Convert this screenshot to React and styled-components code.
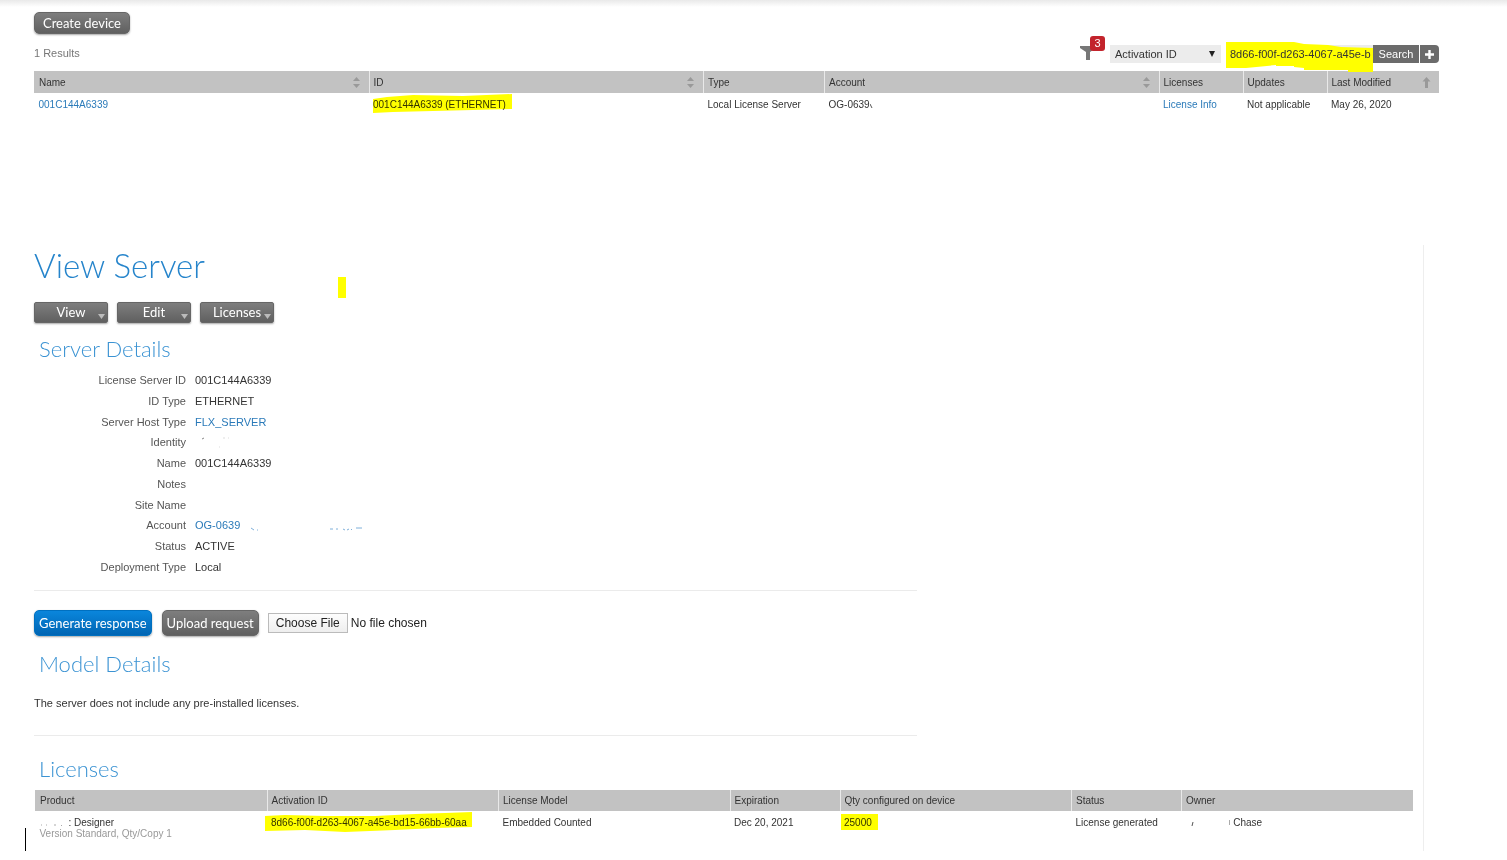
import React from "react";
import styled, { createGlobalStyle, css } from "styled-components";

const GlobalStyle = createGlobalStyle`
  * {
    box-sizing: border-box;
  }
  body {
    margin: 0;
    background: #fff;
    color: #333;
    font-family: "Liberation Sans", Arial, sans-serif;
    font-size: 11px;
  }
`;

const Page = styled.main`
  padding-left: 34px;
`;

const TopShade = styled.div`
  height: 12px;
  margin-left: -34px;
  background: linear-gradient(#e9e9e9, #fff 7px);
`;

const Devices = styled.section`
  margin-right: 68px;
`;

const Button = styled.button`
  height: ${(props) => (props.$tall ? "26px" : "22px")};
  padding: 0 ${(props) => (props.$tall ? "4px" : "8px")} 1px;
  border: 1px solid #666;
  border-radius: 5px;
  background: linear-gradient(#7e7e7e, #606060);
  box-shadow: 0 1px 2px rgba(0, 0, 0, 0.35);
  color: #fff;
  font-family: Lato, sans-serif;
  font-size: 13px;
  white-space: nowrap;
  cursor: pointer;
  ${(props) =>
    props.$primary &&
    css`
      border-color: #0070c0;
      background: linear-gradient(#0a86dc, #0065b3);
    `}
`;

const ResultsBar = styled.div`
  display: flex;
  justify-content: space-between;
  align-items: center;
  margin: 11px 0 8px;
  color: #777;
`;

const Count = styled.span`
  padding-bottom: 2px;
`;

const Filters = styled.form`
  display: flex;
  height: 18px;
`;

const FilterIcon = styled.div`
  position: relative;
  width: 30px;
  svg {
    display: block;
  }
`;

const Badge = styled.span`
  position: absolute;
  top: -9px;
  left: 10px;
  width: 15px;
  height: 15px;
  border-radius: 3px;
  background: #c3242c;
  color: #fff;
  line-height: 15px;
  text-align: center;
`;

const SelectWrap = styled.div`
  position: relative;
  margin-right: 5px;
  svg {
    position: absolute;
    top: 6px;
    right: 6px;
    pointer-events: none;
  }
`;

const Select = styled.select`
  appearance: none;
  width: 111px;
  height: 18px;
  padding: 0 5px;
  border: 0;
  border-radius: 0;
  background: #ececec;
  color: #333;
  font: inherit;
`;

const SearchWrap = styled.div`
  position: relative;
  padding-right: 2px;
  background: #ececec;
`;

const SearchInput = styled.input`
  position: relative;
  display: block;
  width: 145px;
  height: 18px;
  padding: 0 0 0 4px;
  border: 0;
  background: transparent;
  color: #333;
  font: inherit;
`;

const SearchButton = styled.button`
  width: ${(props) => (props.$small ? "19px" : "46px")};
  height: 18px;
  margin-right: ${(props) => (props.$small ? "0" : "1px")};
  padding: 0;
  border: 0;
  border-radius: ${(props) => (props.$small ? "0 4px 4px 0" : "0")};
  background: #6b6b6b;
  color: #fff;
  font: inherit;
  cursor: pointer;
  svg {
    display: block;
    margin: 0 auto;
  }
`;

const Marker = styled.svg`
  position: absolute;
  top: ${(props) => props.$top || 0}px;
  left: ${(props) => props.$left || 0}px;
  mix-blend-mode: ${(props) => (props.$solid ? "normal" : "multiply")};
  pointer-events: none;
`;

const Table = styled.table`
  width: 100%;
  table-layout: fixed;
  border-collapse: collapse;
  font-size: 10px;
`;

const Col = styled.col`
  width: ${(props) => (props.$width ? `${props.$width}px` : "auto")};
`;

const Th = styled.th`
  height: ${(props) => (props.$short ? "21px" : "22px")};
  padding: 0 8px 0 4px;
  border-left: 1px solid #e9e9e9;
  background: #c2c2c2;
  font-weight: normal;
  text-align: left;
  white-space: nowrap;
  &:first-child {
    border-left-color: #c2c2c2;
  }
`;

const ThInner = styled.div`
  display: flex;
  justify-content: space-between;
  align-items: center;
`;

const Td = styled.td`
  padding: 6px 4px 4px;
  line-height: 12px;
  vertical-align: top;
  white-space: nowrap;
`;

const Link = styled.a`
  color: #2a7ab9;
  text-decoration: none;
`;

const Marked = styled.span`
  position: relative;
`;

const Note = styled.div`
  color: #999;
  line-height: 10px;
`;

const Server = styled.section`
  position: relative;
  margin: 130px 83px 0 0;
  padding-right: 10px;
  border-right: 1px solid #eee;
`;

const Title = styled.h1`
  margin: 0 0 17px;
  color: #2584cb;
  font-family: Lato, sans-serif;
  font-size: 33px;
  font-weight: 300;
  line-height: 40px;
`;

const Heading = styled.h2`
  margin: 0 0 0 5px;
  color: #3b93d3;
  font-family: Lato, sans-serif;
  font-size: 22px;
  font-weight: 300;
  line-height: 30px;
`;

const Menus = styled.div`
  display: flex;
  gap: 9px;
  margin-bottom: 11px;
`;

const MenuButton = styled.button`
  position: relative;
  width: 74px;
  height: 21px;
  padding: 0 0 1px;
  border: 1px solid #666;
  border-radius: 2px;
  background: linear-gradient(#7e7e7e, #606060);
  box-shadow: 0 1px 2px rgba(0, 0, 0, 0.35);
  color: #fff;
  font-family: Lato, sans-serif;
  font-size: 13px;
  cursor: pointer;
  svg {
    position: absolute;
    right: 2px;
    bottom: 3px;
  }
`;

const Details = styled.dl`
  display: grid;
  grid-template-columns: 152px 1fr;
  grid-auto-rows: 1fr;
  column-gap: 9px;
  align-items: center;
  min-height: 207px;
  margin: 6px 0 13px;
`;

const Term = styled.dt`
  color: #555;
  text-align: right;
`;

const Value = styled.dd`
  display: flex;
  margin: 0;
`;

const Rule = styled.hr`
  width: 64%;
  margin: 0;
  border: 0;
  border-top: 1px solid #ebebeb;
`;

const Actions = styled.div`
  display: flex;
  align-items: center;
  margin: 19px 0 13px;
`;

const Spaced = styled.div`
  margin-left: 10px;
`;

const FileInput = styled.input`
  margin-left: 9px;
  font-family: inherit;
  font-size: 12px;
  color: #222;
  &::file-selector-button {
    height: 20px;
    margin: 0 3px 0 0;
    padding: 0 7px;
    border: 1px solid #bbb;
    border-radius: 0;
    background: linear-gradient(#fdfdfd, #eee);
    color: #222;
    font: inherit;
  }
`;

const Text = styled.p`
  margin: 17px 0 25px;
  line-height: 14px;
`;

const LicenseBlock = styled.div`
  padding: 18px 0 8px;
`;

const LicenseTable = styled.div`
  margin: 6px 0 0 1px;
`;

const Swatch = styled.span`
  position: absolute;
  top: 32px;
  left: 304px;
  width: 8px;
  height: 21px;
  background: #ff0;
`;

const Caret = styled.span`
  position: absolute;
  bottom: 0;
  left: -9px;
  width: 1px;
  height: 23px;
  background: #000;
`;

const deviceCols = [
  { label: "Name", sort: "both" },
  { label: "ID", sort: "both" },
  { label: "Type", width: 121 },
  { label: "Account", sort: "both" },
  { label: "Licenses", width: 84 },
  { label: "Updates", width: 84 },
  { label: "Last Modified", width: 112, sort: "up" },
];

const licenseCols = [
  { label: "Product" },
  { label: "Activation ID" },
  { label: "License Model" },
  { label: "Expiration", width: 110 },
  { label: "Qty configured on device" },
  { label: "Status", width: 110 },
  { label: "Owner" },
];

const IdentityMarks = () => (
  <svg width='40' height='12' aria-hidden='true'>
    <path d='M7 3l2-1' stroke='#888' />
    <path d='M28 2h2M33 2h1M24 11h1' stroke='#ddd' />
  </svg>
);

const AccountMarks = () => (
  <svg width='124' height='12' aria-hidden='true'>
    <path d='M11 9l3 2M17 11h1' fill='none' stroke='#7fb0da' />
    <path
      d='M90 10h3M96 10h2M103 10l2 1M107 11l2-1M112 10l-1 1M116 9h6'
      fill='none'
      stroke='#7fb0da'
    />
  </svg>
);

const details = [
  ["License Server ID", "001C144A6339"],
  ["ID Type", "ETHERNET"],
  ["Server Host Type", <Link href='#host'>FLX_SERVER</Link>],
  ["Identity", <IdentityMarks />],
  ["Name", "001C144A6339"],
  ["Notes", ""],
  ["Site Name", ""],
  [
    "Account",
    <>
      <Link href='#account'>OG-0639</Link>
      <AccountMarks />
    </>,
  ],
  ["Status", "ACTIVE"],
  ["Deployment Type", "Local"],
];

const SortIcon = ({ type }) =>
  type === "up" ? (
    <svg width='9' height='11' viewBox='0 0 9 11' aria-hidden='true'>
      <path d='M4.5 0L8.5 4.5H6V11H3V4.5H.5z' fill='#999' />
    </svg>
  ) : (
    <svg width='9' height='11' viewBox='0 0 9 11' aria-hidden='true'>
      <path d='M4.5 0L8 4H1zM4.5 11L8 7H1z' fill='#999' />
    </svg>
  );

const TableHead = ({ cols, short }) => (
  <>
    <colgroup>
      {cols.map((col) => (
        <Col key={col.label} $width={col.width} />
      ))}
    </colgroup>
    <thead>
      <tr>
        {cols.map((col) => (
          <Th key={col.label} $short={short}>
            <ThInner>
              {col.label}
              {col.sort && <SortIcon type={col.sort} />}
            </ThInner>
          </Th>
        ))}
      </tr>
    </thead>
  </>
);

const DeviceList = () => (
  <Devices>
    <Button type='button'>Create device</Button>
    <ResultsBar>
      <Count>1 Results</Count>
      <Filters onSubmit={(e) => e.preventDefault()}>
        <FilterIcon>
          <svg width='18' height='17' viewBox='0 0 18 17' aria-hidden='true'>
            <path d='M0 1H16V3L10 7V15H6V7L0 3z' fill='#777' />
          </svg>
          <Badge>3</Badge>
        </FilterIcon>
        <SelectWrap>
          <Select aria-label='Search field' defaultValue='activation'>
            <option value='activation'>Activation ID</option>
          </Select>
          <svg width='6' height='6' viewBox='0 0 6 6' aria-hidden='true'>
            <path d='M0 0H6L3 6z' fill='#222' />
          </svg>
        </SelectWrap>
        <SearchWrap>
          <Marker width='147' height='32' $top={-3} $solid>
            <path
              d='M0 0L68 0L78 2L102 3L115 5L147 6V30H122V28H78V26L68 25V24H50V23L20 26H0z'
              fill='#ff0'
            />
          </Marker>
          <SearchInput
            type='text'
            aria-label='Search value'
            defaultValue='8d66-f00f-d263-4067-a45e-bd15-66bb-60aa'
          />
        </SearchWrap>
        <SearchButton type='submit'>Search</SearchButton>
        <SearchButton type='button' $small aria-label='Add filter'>
          <svg width='11' height='11' viewBox='0 0 11 11'>
            <path d='M5.5 1V10M1 5.5H10' stroke='#fff' strokeWidth='2.4' />
          </svg>
        </SearchButton>
      </Filters>
    </ResultsBar>
    <Table>
      <TableHead cols={deviceCols} />
      <tbody>
        <tr>
          <Td>
            <Link href='#device'>001C144A6339</Link>
          </Td>
          <Td>
            <Marked>
              001C144A6339 (ETHERNET)
              <Marker width='139' height='20' $top={-5}>
                <path
                  d='M0 5L14 3L40 1L90 2L139 0V15L100 16L60 17L20 18L0 19z'
                  fill='#ff0'
                />
              </Marker>
            </Marked>
          </Td>
          <Td>Local License Server</Td>
          <Td>
            OG-0639
            <svg width='3' height='8' aria-hidden='true'>
              <path d='M0 4L2 8' stroke='#555' />
            </svg>
          </Td>
          <Td>
            <Link href='#info'>License Info</Link>
          </Td>
          <Td>Not applicable</Td>
          <Td>May 26, 2020</Td>
        </tr>
      </tbody>
    </Table>
  </Devices>
);

const ServerView = () => (
  <Server>
    <Title>View Server</Title>
    <Swatch />
    <Menus>
      {["View", "Edit", "Licenses"].map((label) => (
        <MenuButton key={label} type='button'>
          {label}
          <svg width='7' height='5' viewBox='0 0 7 5' aria-hidden='true'>
            <path d='M0 0H7L3.5 5z' fill='#bbb' />
          </svg>
        </MenuButton>
      ))}
    </Menus>
    <Heading>Server Details</Heading>
    <Details>
      {details.map(([label, value]) => (
        <React.Fragment key={label}>
          <Term>{label}</Term>
          <Value>{value}</Value>
        </React.Fragment>
      ))}
    </Details>
    <Rule />
    <Actions>
      <Button type='button' $tall $primary>
        Generate response
      </Button>
      <Spaced>
        <Button type='button' $tall>
          Upload request
        </Button>
      </Spaced>
      <FileInput type='file' aria-label='Request file' />
    </Actions>
    <Heading>Model Details</Heading>
    <Text>The server does not include any pre-installed licenses.</Text>
    <Rule />
    <LicenseBlock>
      <Heading>Licenses</Heading>
      <LicenseTable>
        <Table>
          <TableHead cols={licenseCols} short />
          <tbody>
            <tr>
              <Td>
                <svg width='29' height='8' aria-hidden='true'>
                  <path d='M1 7h1M6 7h1M14 7h2M22 7l-1 1' stroke='#aaa' />
                </svg>
                : Designer
                <Note>Version Standard, Qty/Copy 1</Note>
              </Td>
              <Td>
                <Marked>
                  8d66-f00f-d263-4067-a45e-bd15-66bb-60aa
                  <Marker width='207' height='21' $top={-5} $left={-6}>
                    <path
                      d='M0 4L20 3L60 4L110 4L150 2L180 1L207 0V15L170 16L130 18L80 20L40 18L0 19z'
                      fill='#ff0'
                    />
                  </Marker>
                </Marked>
              </Td>
              <Td>Embedded Counted</Td>
              <Td>Dec 20, 2021</Td>
              <Td>
                <Marked>
                  25000
                  <Marker width='37' height='16' $top={-3} $left={-3}>
                    <path d='M0 0H37V16H0z' fill='#ff0' />
                  </Marker>
                </Marked>
              </Td>
              <Td>License generated</Td>
              <Td>
                <svg width='45' height='8' aria-hidden='true'>
                  <path d='M7 4L6 8' stroke='#555' />
                  <path d='M43.5 2V7' stroke='#aaa' />
                </svg>
                {" Chase"}
              </Td>
            </tr>
          </tbody>
        </Table>
      </LicenseTable>
    </LicenseBlock>
    <Caret />
  </Server>
);

export default function App() {
  return (
    <>
      <GlobalStyle />
      <Page>
        <TopShade />
        <DeviceList />
        <ServerView />
      </Page>
    </>
  );
}
